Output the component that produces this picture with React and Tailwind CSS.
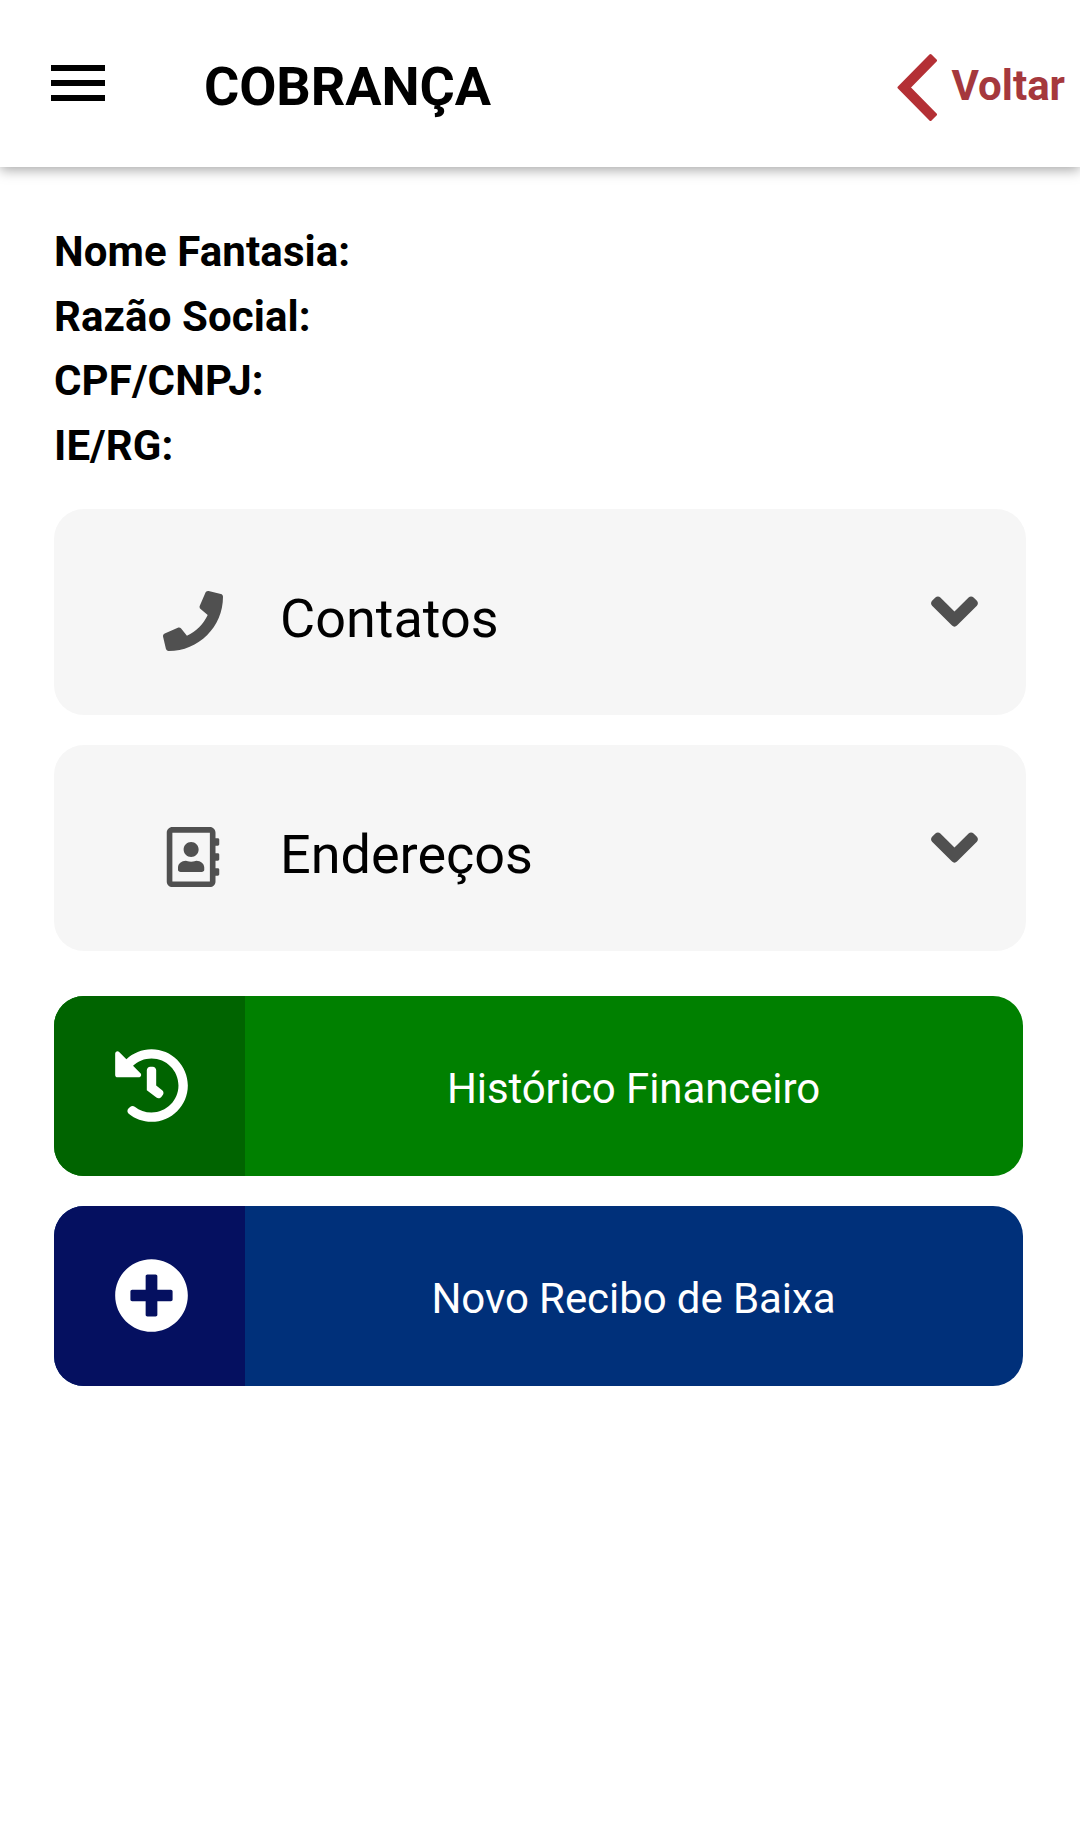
import React from 'react';
import { FaAngleDown, FaHistory, FaPhone, FaPlusCircle, FaRegAddressBook } from 'react-icons/fa';

const fields = ['Nome Fantasia:', 'Razão Social:', 'CPF/CNPJ:', 'IE/RG:'];

const sections = [
  { label: 'Contatos', icon: FaPhone },
  { label: 'Endereços', icon: FaRegAddressBook },
];

const actions = [
  { label: 'Histórico Financeiro', icon: FaHistory, color: 'bg-[#008000]', iconColor: 'bg-[#006400]' },
  { label: 'Novo Recibo de Baixa', icon: FaPlusCircle, color: 'bg-[#00307a]', iconColor: 'bg-[#051060]' },
];

const Header = () => (
  <header className="flex h-[167px] items-start bg-white shadow-[0_3px_12px_rgba(0,0,0,0.35)]">
    <button aria-label="Menu" className="mt-[65px] ml-[51px] flex w-[54px] flex-col gap-[9px]">
      <span className="h-1.5 bg-black" />
      <span className="h-1.5 bg-black" />
      <span className="h-1.5 bg-black" />
    </button>
    <h1 className="mt-[55px] ml-[99px] text-[54px] leading-[64px] font-bold tracking-[-0.1px]">COBRANÇA</h1>
    <button className="mt-[53px] mr-[15px] ml-auto flex items-start text-[#a5383d]">
      <svg className="h-[69px] w-10" viewBox="0 0 40 69" fill="#b43035" stroke="#b43035" strokeWidth="3" strokeLinejoin="round">
        <path d="M2 34.5L33.5 2.5L38.5 7.5L12 34.5L38.5 61.5L33.5 66.5Z" />
      </svg>
      <span className="mt-2 ml-[15px] text-[42px] leading-[50px] font-bold">Voltar</span>
    </button>
  </header>
);

const Section = ({ label, icon: Icon }) => (
  <button className="flex h-[206px] w-[972px] items-center rounded-[30px] bg-[#f6f6f6] pr-[34px] pl-[109px] text-left">
    <Icon className="mt-[18px] size-[60px] text-[#505050]" />
    <span className="mt-3.5 ml-[57px] text-[54px] leading-[64px]">{label}</span>
    <FaAngleDown className="ml-auto size-[75px] text-[#505050]" />
  </button>
);

const Action = ({ label, icon: Icon, color, iconColor }) => (
  <button className={`flex h-[180px] w-[969px] overflow-hidden rounded-[30px] text-white ${color}`}>
    <span className={`flex h-full w-[191px] items-center justify-center pl-1 ${iconColor}`}>
      <Icon className="size-[75px]" />
    </span>
    <span className="flex h-full flex-1 items-center justify-center pt-1.5 pr-px text-[42px] tracking-[-0.08px]">
      {label}
    </span>
  </button>
);

const App = () => (
  <div className="min-h-screen bg-white font-['Roboto',sans-serif] text-black">
    <Header />
    <main className="px-[54px] pt-[53px]">
      <div className="text-[42px] leading-[64.7px] font-bold tracking-[0.1px]">
        {fields.map((field) => (
          <p key={field}>{field}</p>
        ))}
      </div>
      <div className="mt-[30px] flex flex-col gap-[30px]">
        {sections.map((section) => (
          <Section key={section.label} {...section} />
        ))}
      </div>
      <div className="mt-[45px] flex flex-col gap-[30px]">
        {actions.map((action) => (
          <Action key={action.label} {...action} />
        ))}
      </div>
    </main>
  </div>
);

export default App;
